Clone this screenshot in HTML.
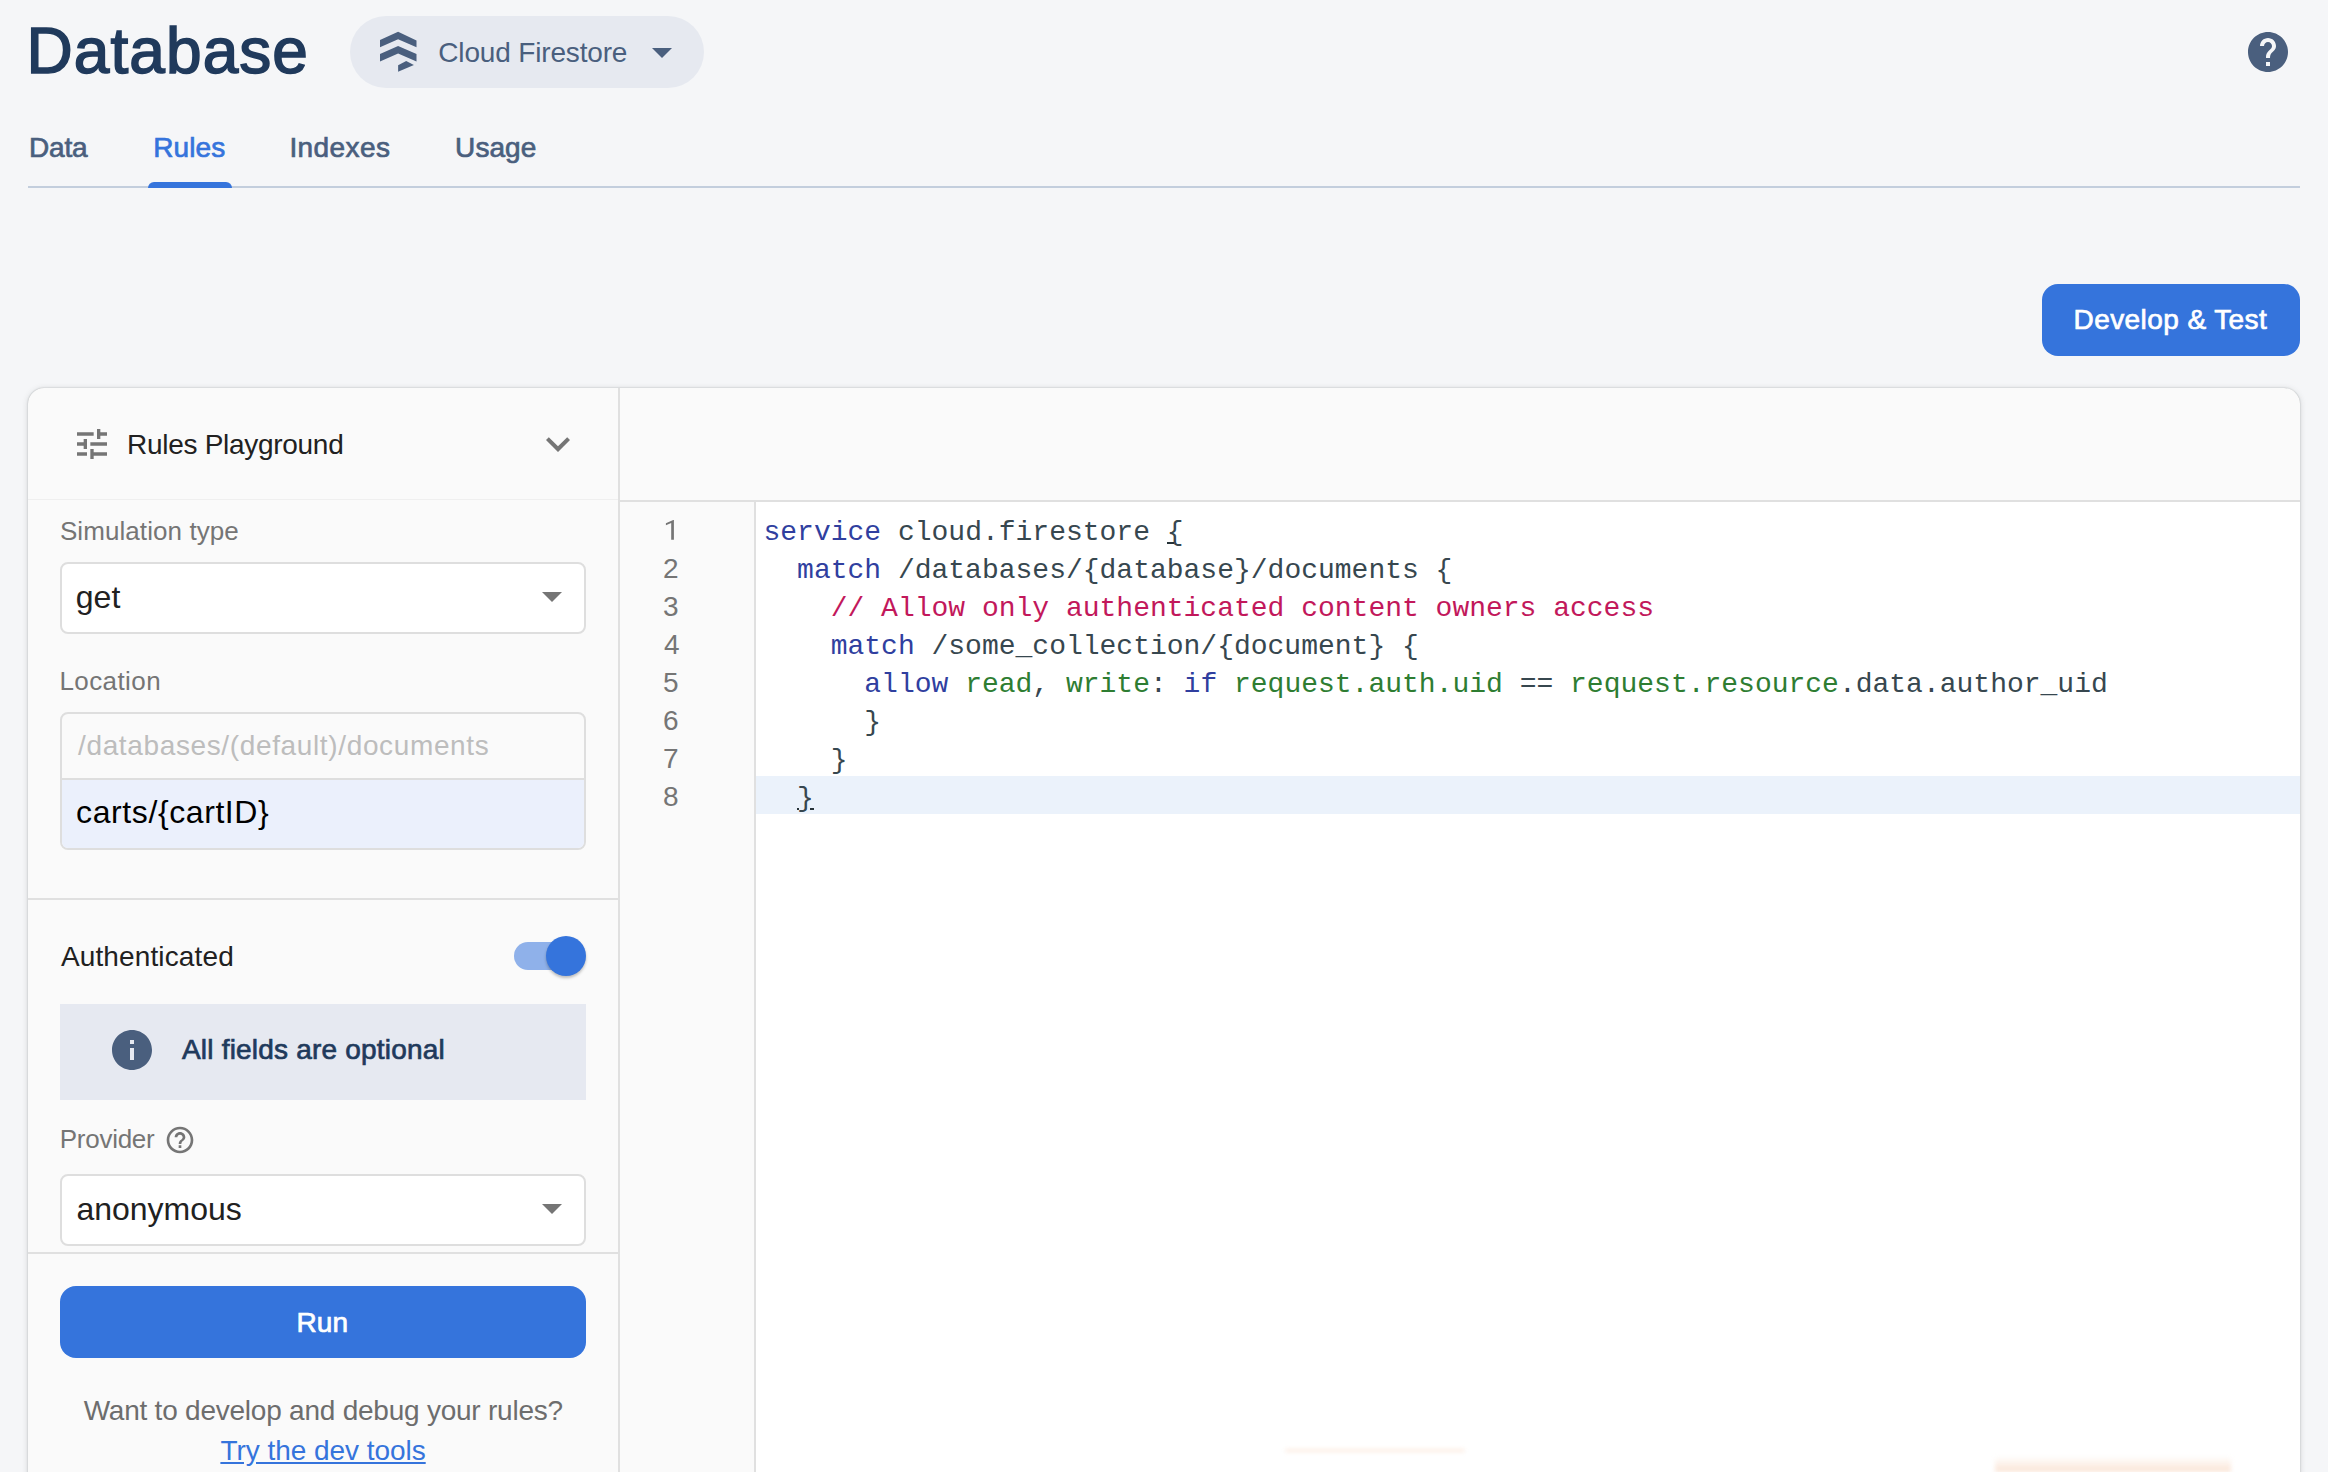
<!DOCTYPE html>
<html><head><meta charset="utf-8"><style>
html,body{margin:0;padding:0;}
body{width:2328px;height:1472px;overflow:hidden;position:relative;background:#f5f6f8;font-family:"Liberation Sans",sans-serif;}
.abs{position:absolute;}
.t{position:absolute;white-space:pre;}
.code{position:absolute;white-space:pre;font-family:"Liberation Mono",monospace;font-size:28px;line-height:28px;color:#37474f;}
.k{color:#303f9f} .g{color:#2e7d32} .c{color:#c2185b} .d{color:#37474f}
</style></head><body>
<div class="t" style="left:26.60px;top:19.20px;font-family:'Liberation Sans';font-size:64px;line-height:64px;color:#203a5c;font-weight:normal;letter-spacing:1.057px;-webkit-text-stroke:1.6px currentColor;">Database</div>
<div class="abs" style="left:350px;top:16px;width:354px;height:72px;border-radius:36px;background:#e6e9f0"></div>
<svg class="abs" style="left:370px;top:24px" width="56" height="56" viewBox="370 24 56 56"><g fill="#4a5f7e">
<polygon points="380,39.9 398.1,31.8 416.5,40.4 416.5,47.2 398.1,39.2 380,47.2"/>
<polygon points="380,54.1 398.1,46 416.5,54.1 416.5,61.5 398.1,53.6 380,61.5"/>
<polygon points="398.1,65.3 406.2,61 413.9,65 398.1,71.8"/></g></svg>
<div class="t" style="left:438.30px;top:39.00px;font-family:'Liberation Sans';font-size:28px;line-height:28px;color:#4a5f7e;font-weight:normal;letter-spacing:-0.164px;">Cloud Firestore</div>
<svg class="abs" style="left:650px;top:46px" width="24" height="14" viewBox="650 46 24 14"><polygon points="652,48 672,48 662,58" fill="#4a5f7e"/></svg>
<svg class="abs" style="left:2244px;top:28px" width="48" height="48" viewBox="0 0 24 24"><path fill="#4a5f7e" d="M12 2C6.48 2 2 6.48 2 12s4.48 10 10 10 10-4.48 10-10S17.52 2 12 2zm1 17h-2v-2h2v2zm2.07-7.75l-.9.92C13.45 12.9 13 13.5 13 15h-2v-.5c0-1.1.45-2.1 1.17-2.83l1.24-1.26c.37-.36.59-.86.59-1.41 0-1.1-.9-2-2-2s-2 .9-2 2H8c0-2.21 1.790-4 4-4s4 1.79 4 4c0 .88-.36 1.68-.93 2.25z"/></svg>
<div class="t" style="left:29.10px;top:134.30px;font-family:'Liberation Sans';font-size:28px;line-height:28px;color:#4a5f7e;font-weight:normal;letter-spacing:-0.233px;-webkit-text-stroke:0.7px currentColor;">Data</div>
<div class="t" style="left:153.20px;top:134.30px;font-family:'Liberation Sans';font-size:28px;line-height:28px;color:#3574dc;font-weight:normal;letter-spacing:0.100px;-webkit-text-stroke:0.7px currentColor;">Rules</div>
<div class="t" style="left:289.40px;top:134.30px;font-family:'Liberation Sans';font-size:28px;line-height:28px;color:#4a5f7e;font-weight:normal;letter-spacing:0.433px;-webkit-text-stroke:0.7px currentColor;">Indexes</div>
<div class="t" style="left:455.10px;top:134.30px;font-family:'Liberation Sans';font-size:28px;line-height:28px;color:#4a5f7e;font-weight:normal;letter-spacing:0.075px;-webkit-text-stroke:0.7px currentColor;">Usage</div>
<div class="abs" style="left:28px;top:186px;width:2272px;height:2px;background:#c3cedd"></div>
<div class="abs" style="left:148px;top:182px;width:84px;height:6px;border-radius:6px 6px 0 0;background:#3574dc"></div>
<div class="abs" style="left:2042px;top:284px;width:258px;height:72px;border-radius:16px;background:#3574dc"></div>
<div class="t" style="left:2073.50px;top:306.40px;font-family:'Liberation Sans';font-size:28px;line-height:28px;color:#fff;font-weight:normal;letter-spacing:0.423px;-webkit-text-stroke:0.7px currentColor;">Develop &amp; Test</div>
<div class="abs" style="left:28px;top:388px;width:2272px;height:1200px;border-radius:16px;background:#fafafa;box-shadow:0 0 1.5px rgba(60,64,67,0.4),0 1px 6px rgba(60,64,67,0.18)"></div>
<div class="abs" style="left:620px;top:500px;width:1680px;height:2px;background:#e0e0e0"></div>
<div class="abs" style="left:756px;top:502px;width:1544px;height:1000px;background:#fff"></div>
<div class="abs" style="left:754px;top:502px;width:2px;height:1000px;background:#e0e0e0"></div>
<div class="abs" style="left:618px;top:388px;width:2px;height:1100px;background:#e0e0e0"></div>
<div class="abs" style="left:28px;top:499px;width:590px;height:1px;background:#efefef"></div>
<div class="abs" style="left:756px;top:776px;width:1544px;height:38px;background:#ebf2fb"></div>
<svg class="abs" style="left:72px;top:424px" width="40" height="40" viewBox="0 0 24 24"><path fill="#757575" d="M3 17v2h6v-2H3zM3 5v2h10V5H3zm10 16v-2h8v-2h-8v-2h-2v6h2zM7 9v2H3v2h4v2h2V9H7zm14 4v-2H11v2h10zm-6-4h2V7h4V5h-4V3h-2v6z"/></svg>
<div class="t" style="left:127.00px;top:431.20px;font-family:'Liberation Sans';font-size:28px;line-height:28px;color:#212121;font-weight:normal;letter-spacing:-0.287px;">Rules Playground</div>
<svg class="abs" style="left:534px;top:420px" width="48" height="48" viewBox="0 0 24 24"><path fill="#757575" d="M16.59 8.59L12 13.17 7.41 8.59 6 10l6 6 6-6z"/></svg>
<div class="t" style="left:59.90px;top:518.20px;font-family:'Liberation Sans';font-size:26px;line-height:26px;color:#757575;font-weight:normal;letter-spacing:0.079px;">Simulation type</div>
<div class="abs" style="left:60px;top:562px;width:522px;height:68px;border:2px solid #dedede;border-radius:8px;background:#fff"></div>
<div class="t" style="left:75.70px;top:581.00px;font-family:'Liberation Sans';font-size:32px;line-height:32px;color:#212121;font-weight:normal;letter-spacing:0.050px;">get</div>
<svg class="abs" style="left:540px;top:590px" width="24" height="14" viewBox="540 590 24 14"><polygon points="542,592 562,592 552,602" fill="#757575"/></svg>
<div class="t" style="left:59.50px;top:668.20px;font-family:'Liberation Sans';font-size:26px;line-height:26px;color:#757575;font-weight:normal;letter-spacing:0.400px;">Location</div>
<div class="abs" style="left:60px;top:712px;width:522px;height:134px;border:2px solid #dedede;border-radius:8px;background:#fafafa;overflow:hidden"><div style="position:absolute;left:0;top:64px;width:100%;height:2px;background:#dedede"></div><div style="position:absolute;left:0;top:66px;width:100%;height:70px;background:#ebf0fc"></div></div>
<div class="t" style="left:78.00px;top:732.00px;font-family:'Liberation Sans';font-size:28px;line-height:28px;color:#bdbdbd;font-weight:normal;letter-spacing:0.638px;">/databases/(default)/documents</div>
<div class="t" style="left:76.10px;top:796.30px;font-family:'Liberation Sans';font-size:32px;line-height:32px;color:#000;font-weight:normal;letter-spacing:0.592px;">carts/{cartID}</div>
<div class="abs" style="left:28px;top:898px;width:590px;height:2px;background:#e0e0e0"></div>
<div class="t" style="left:60.90px;top:943.00px;font-family:'Liberation Sans';font-size:28px;line-height:28px;color:#212121;font-weight:normal;letter-spacing:0.133px;">Authenticated</div>
<div class="abs" style="left:514px;top:942px;width:70px;height:28px;border-radius:14px;background:#8fb1ea"></div>
<div class="abs" style="left:546px;top:936px;width:40px;height:40px;border-radius:20px;background:#3574dc;box-shadow:0 2px 3px rgba(0,0,0,0.25)"></div>
<div class="abs" style="left:60px;top:1004px;width:526px;height:96px;background:#e6e9f1"></div>
<svg class="abs" style="left:108px;top:1026px" width="48" height="48" viewBox="0 0 24 24"><path fill="#4a5f7e" d="M12 2C6.48 2 2 6.48 2 12s4.48 10 10 10 10-4.48 10-10S17.52 2 12 2zm1 15h-2v-6h2v6zm0-8h-2V7h2v2z"/></svg>
<div class="t" style="left:182.00px;top:1036.00px;font-family:'Liberation Sans';font-size:28px;line-height:28px;color:#1f3a5c;font-weight:normal;letter-spacing:0.195px;-webkit-text-stroke:0.7px currentColor;">All fields are optional</div>
<div class="t" style="left:59.80px;top:1126.00px;font-family:'Liberation Sans';font-size:26px;line-height:26px;color:#757575;font-weight:normal;letter-spacing:-0.271px;">Provider</div>
<svg class="abs" style="left:163.5px;top:1124px" width="32" height="32" viewBox="0 0 24 24"><path fill="#757575" d="M11 18h2v-2h-2v2zm1-16C6.48 2 2 6.48 2 12s4.48 10 10 10 10-4.48 10-10S17.52 2 12 2zm0 18c-4.41 0-8-3.59-8-8s3.59-8 8-8 8 3.59 8 8-3.59 8-8 8zm0-14c-2.21 0-4 1.79-4 4h2c0-1.1.9-2 2-2s2 .9 2 2c0 2-3 1.75-3 5h2c0-2.25 3-2.5 3-5 0-2.21-1.79-4-4-4z"/></svg>
<div class="abs" style="left:60px;top:1174px;width:522px;height:68px;border:2px solid #dedede;border-radius:8px;background:#fff"></div>
<div class="t" style="left:76.40px;top:1193.00px;font-family:'Liberation Sans';font-size:32px;line-height:32px;color:#212121;font-weight:normal;letter-spacing:0.000px;">anonymous</div>
<svg class="abs" style="left:540px;top:1200px" width="24" height="14" viewBox="540 1200 24 14"><polygon points="542,1204 562,1204 552,1214" fill="#757575"/></svg>
<div class="abs" style="left:28px;top:1252px;width:590px;height:2px;background:#e0e0e0"></div>
<div class="abs" style="left:60px;top:1286px;width:526px;height:72px;border-radius:16px;background:#3574dc"></div>
<div class="t" style="left:296.50px;top:1308.50px;font-family:'Liberation Sans';font-size:28px;line-height:28px;color:#fff;font-weight:normal;letter-spacing:0.100px;-webkit-text-stroke:0.7px currentColor;">Run</div>
<div class="t" style="left:83.70px;top:1396.80px;font-family:'Liberation Sans';font-size:28px;line-height:28px;color:#6d6d6d;font-weight:normal;letter-spacing:-0.231px;">Want to develop and debug your rules?</div>
<div class="t" style="left:220.40px;top:1437.00px;font-family:'Liberation Sans';font-size:28px;line-height:28px;color:#3574dc;font-weight:normal;letter-spacing:-0.037px;text-decoration:underline;">Try the dev tools</div>
<div class="code" style="left:763.50px;top:518.55px"><span class="k">service</span><span class="d"> cloud.firestore {</span></div>
<svg class="abs" style="left:660px;top:515px" width="20" height="30" viewBox="660 515 20 30"><polygon fill="#757575" points="671.2,539.7 673.9,539.7 673.9,519.9 673.2,519.9 665.9,523.2 665.9,525.3 671.2,523.1"/></svg>
<div class="code" style="left:797.10px;top:556.55px"><span class="k">match</span><span class="d"> /databases/{database}/documents {</span></div>
<div class="t" style="left:663.00px;top:555.00px;font-family:'Liberation Sans';font-size:28px;line-height:28px;color:#757575;font-weight:normal;letter-spacing:0.000px;">2</div>
<div class="code" style="left:830.70px;top:594.55px"><span class="c">// Allow only authenticated content owners access</span></div>
<div class="t" style="left:663.00px;top:593.00px;font-family:'Liberation Sans';font-size:28px;line-height:28px;color:#757575;font-weight:normal;letter-spacing:0.000px;">3</div>
<div class="code" style="left:830.70px;top:632.55px"><span class="k">match</span><span class="d"> /some_collection/{document} {</span></div>
<div class="t" style="left:664.00px;top:631.00px;font-family:'Liberation Sans';font-size:28px;line-height:28px;color:#757575;font-weight:normal;letter-spacing:0.000px;">4</div>
<div class="code" style="left:864.30px;top:670.55px"><span class="k">allow</span><span class="d"> </span><span class="g">read</span><span class="d">, </span><span class="g">write</span><span class="d">: </span><span class="k">if</span><span class="d"> </span><span class="g">request.auth.uid</span><span class="d"> == </span><span class="g">request.resource</span><span class="d">.data.author_uid</span></div>
<div class="t" style="left:663.00px;top:669.00px;font-family:'Liberation Sans';font-size:28px;line-height:28px;color:#757575;font-weight:normal;letter-spacing:0.000px;">5</div>
<div class="code" style="left:864.30px;top:708.55px"><span class="d">}</span></div>
<div class="t" style="left:663.00px;top:707.00px;font-family:'Liberation Sans';font-size:28px;line-height:28px;color:#757575;font-weight:normal;letter-spacing:0.000px;">6</div>
<div class="code" style="left:830.70px;top:746.55px"><span class="d">}</span></div>
<div class="t" style="left:663.00px;top:745.00px;font-family:'Liberation Sans';font-size:28px;line-height:28px;color:#757575;font-weight:normal;letter-spacing:0.000px;">7</div>
<div class="code" style="left:797.10px;top:784.55px"><span class="d">}</span></div>
<div class="t" style="left:663.00px;top:783.00px;font-family:'Liberation Sans';font-size:28px;line-height:28px;color:#757575;font-weight:normal;letter-spacing:0.000px;">8</div>
<div class="abs" style="left:1167px;top:542px;width:7px;height:2px;background:#263238"></div>
<div class="abs" style="left:810px;top:808px;width:4px;height:2px;background:#263238"></div>
<div class="abs" style="left:797px;top:808px;width:2px;height:2px;background:#263238"></div>
<div class="abs" style="left:1995px;top:1456px;width:236px;height:16px;background:linear-gradient(to bottom,rgba(246,200,170,0) 0%,rgba(246,205,178,0.55) 100%);filter:blur(2px)"></div>
<div class="abs" style="left:1285px;top:1449px;width:180px;height:3px;background:rgba(246,200,170,0.35);filter:blur(2px);border-radius:2px"></div>
</body></html>
